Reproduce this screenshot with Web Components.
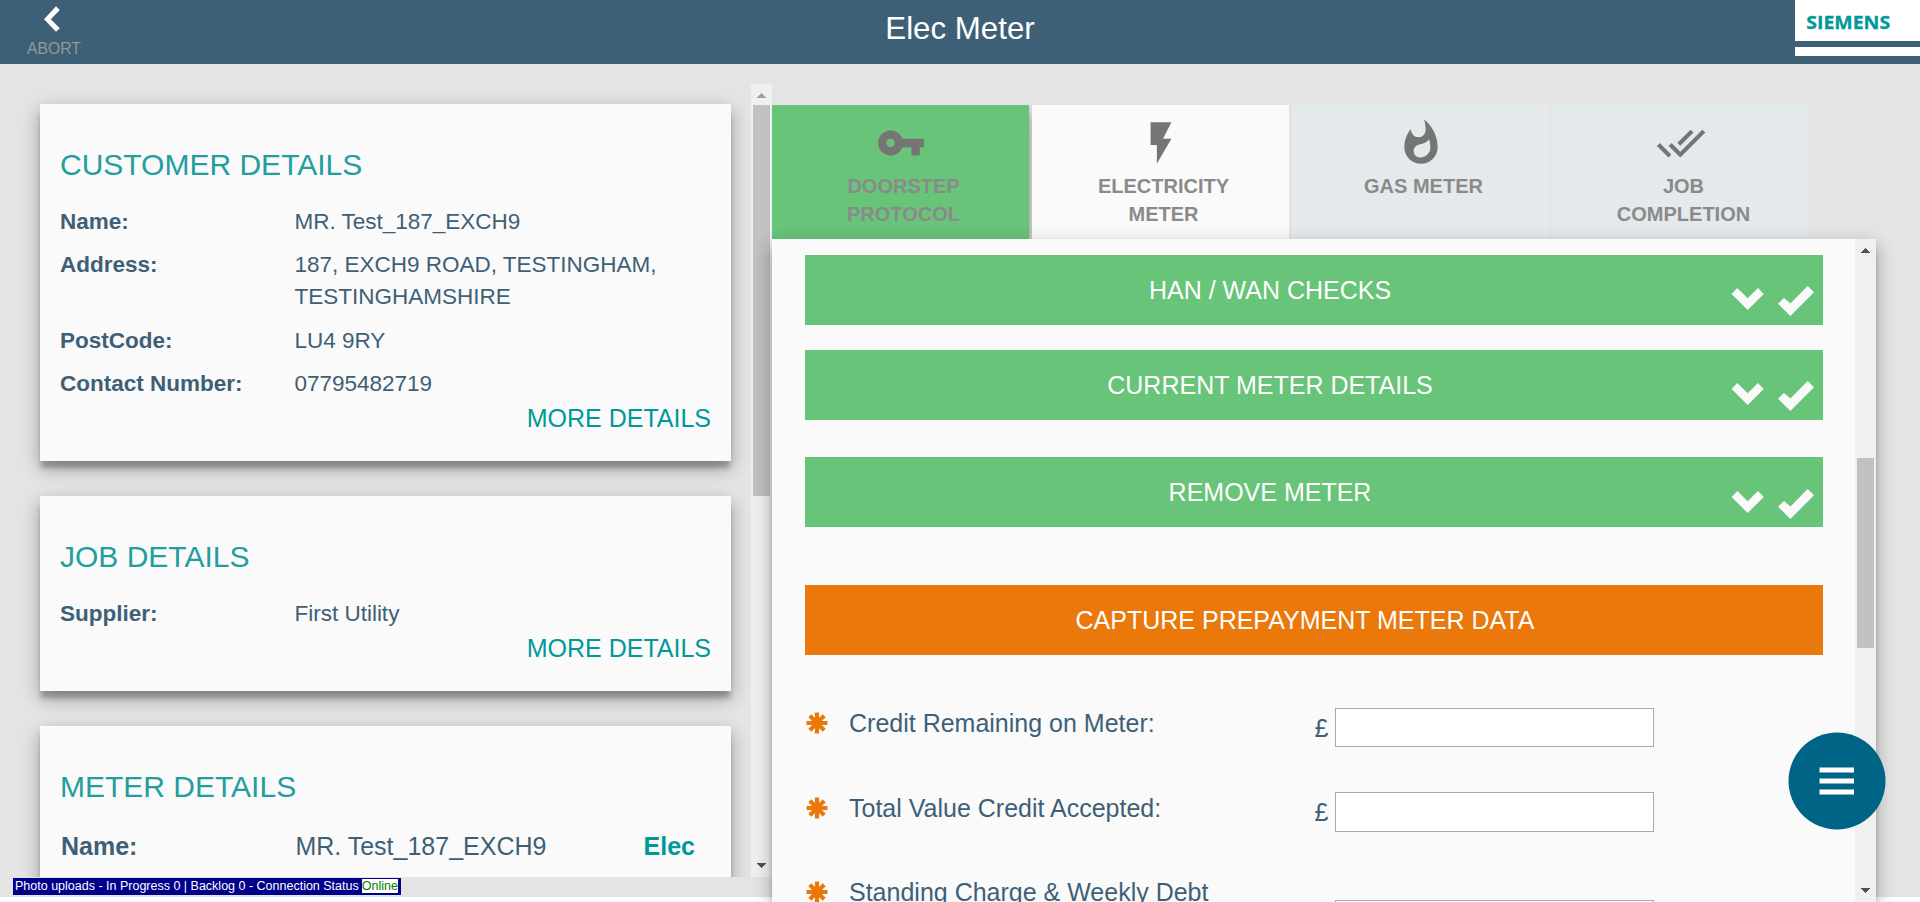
<!DOCTYPE html>
<html lang="en">
<head>
<meta charset="utf-8">
<title>Elec Meter</title>
<style>
html, body { margin: 0; height: 902px; overflow: hidden; background: #fff; }
body { font-family: "Liberation Sans", Arial, sans-serif; color: #3e6077; }
</style>
</head>
<body>
<meter-app></meter-app>
<script>
const define = (name, html) => {
  const template = document.createElement('template');
  template.innerHTML = html;
  customElements.define(name, class extends HTMLElement {
    constructor() {
      super();
      this.attachShadow({ mode: 'open' }).append(template.content.cloneNode(true));
    }
  });
};

define('app-header', `
<style>
:host { display: grid; grid-template-columns: 300px 1fr 300px; height: 64px; background: #3e6077; color: #fff; }
.abort { width: 108px; display: flex; flex-direction: column; align-items: center; font-size: 15.7px; line-height: 22px; color: #8f9a9d; }
.abort svg { display: block; width: 108px; height: 38px; }
h1 { margin: 0; font-size: 31.25px; font-weight: 400; text-align: center; line-height: 58px; height: 64px; }
.logo { justify-self: end; width: 125px; height: 56px; display: flex; flex-direction: column; justify-content: space-between; }
.logo svg { display: block; background: #fff; }
.logo i { display: block; height: 9.5px; background: #fff; }
</style>
<div class="abort"><svg viewBox="0 0 108 38"><path fill="#fff" d="M56 6.3 59.8 10 50.8 19.2 59.8 28.3 56 31.7 44 19.2Z"/></svg>ABORT</div>
<h1>Elec Meter</h1>
<div class="logo"><svg width="125" height="41" viewBox="0 0 125 41"><text x="11.2" y="28.7" textLength="84" lengthAdjust="spacingAndGlyphs" font-family="Open Sans, sans-serif" font-weight="700" font-size="18.2" fill="#099" stroke="#099" stroke-width=".3">SIEMENS</text></svg><i></i></div>`);

define('scroll-rail', `
<style>
:host { display: flex; flex-direction: column; width: 21px; flex: none; background: #f0f0f0; --up: #505050; }
svg { display: block; width: 21px; height: 21px; flex: none; }
.track { flex: 1; padding: var(--start, 0) 2px 0; }
.thumb { height: var(--size); background: #c1c1c1; }
</style>
<svg viewBox="0 0 21 21" shape-rendering="crispEdges"><path fill="var(--up)" d="M10 9h1v1h1v1h1v1h1v1h1v1H6v-1h1v-1h1v-1h1v-1h1z"/></svg>
<div class="track"><div class="thumb"></div></div>
<svg viewBox="0 0 21 21" shape-rendering="crispEdges"><path fill="#505050" d="M6 7h9v1h-1v1h-1v1h-1v1h-1v1h-1v-1H9v-1H8V9H7V8H6z"/></svg>`);

define('info-card', `
<style>
:host { display: block; box-sizing: border-box; width: 691px; flex: none; padding: 40px 20px 0; background: #fafafa; box-shadow: var(--depth); }
.title { display: block; font-size: 30px; line-height: 42px; color: #229e9e; margin-bottom: 20px; }
.more { display: block; text-align: right; font-size: 25px; line-height: 36px; color: #099; }
</style>
<span class="title"><slot name="title"></slot></span>
<slot></slot>
<span class="more"><slot name="more"></slot></span>`);

define('info-row', `
<style>
:host { display: grid; grid-template-columns: 234.4px 1fr auto; font-size: var(--row-size, 22.5px); line-height: 32px; margin-bottom: 11.3px; }
.label { font-weight: 700; }
.tag { font-weight: 700; color: #099; padding-right: 16px; }
</style>
<span class="label"><slot name="label"></slot></span><span><slot></slot></span><span class="tag"><slot name="tag"></slot></span>`);

define('step-tab', `
<style>
:host { display: flex; flex-direction: column; align-items: center; box-sizing: border-box; width: 257px; height: 134px; padding-top: 12.5px; background: #e4eaec; color: #8a8a8a; }
::slotted(svg) { display: block; width: 50px; height: 50px; fill: #757575; margin-bottom: 4.9px; }
.text { width: 170px; padding-left: 6px; text-align: center; font-weight: 700; font-size: 20px; line-height: 28px; }
</style>
<slot name="icon"></slot><div class="text"><slot></slot></div>`);

define('section-bar', `
<style>
:host { display: flex; height: 70px; align-items: center; background: #68c479; color: #fff; font-size: 25px; }
.text { flex: 1; text-align: center; }
svg { display: block; width: 88px; height: 70px; overflow: visible; margin-top: var(--nudge, 0); }
:host([active]) { background: #eb780a; }
:host([active]) svg { visibility: hidden; width: 18px; }
</style>
<span class="text"><slot></slot></span>
<svg viewBox="0 0 88 70" fill="#fafafa"><path d="M2.3 33 12.7 43.2 23 33 28.8 39 12.7 55-3.4 39Z"/><path d="M72.7 31 79 37.2 55.4 61 43 48.7 49 43 55.4 48.4Z"/></svg>`);

define('money-field', `
<style>
:host { display: grid; grid-template-columns: 44px 465.5px 20.5px 319px; font-size: 25px; line-height: 36px; height: 84px; align-items: start; }
svg { width: 22px; height: 22px; margin: calc(5.5px + var(--drop, 0px)) 0 0 1px; }
.pound { padding-top: 4px; }
input { display: block; box-sizing: border-box; width: 319px; height: calc(39px + var(--drop, 0px)); margin: 2px 0 0; border: 1px solid #a9a9a9; background: #fff; padding: 0; }
.label { margin-top: calc(-1px + var(--drop, 0px)); white-space: nowrap; }
:host([stacked]) .pound { visibility: hidden; }
:host([stacked]) input { margin-top: 26px; }
</style>
<svg viewBox="-11 -11 22 22" stroke="#eb780a" stroke-width="4.2"><path d="M0-10.5v21M-10.5 0h21M-7.2-7.2 7.2 7.2M-7.2 7.2 7.2-7.2"/></svg>
<span class="label"><slot></slot></span><span class="pound"><slot name="unit"></slot></span><input aria-label="Amount">`);

define('menu-button', `
<style>
:host { display: block; width: 98px; height: 98px; }
svg { display: block; }
</style>
<svg width="98" height="98"><circle cx="49" cy="49" r="48.5" fill="#006487"/><path fill="#fff" d="M31.5 35.5h34.5v4.9H31.5zM31.5 46.5h34.5v4.9H31.5zM31.5 57.5h34.5v4.9H31.5z"/></svg>`);

define('upload-status', `
<style>
:host { display: block; box-sizing: border-box; width: 388px; height: 17px; padding: 1px 3px 2px 2px; background: #00008b; color: #fff; font-size: 12.5px; line-height: 14px; white-space: nowrap; }
div { display: flex; justify-content: space-between; }
b { font-weight: 400; background: #fff; color: #008000; }
</style>
<div><span>Photo uploads - In Progress 0 | Backlog 0 - Connection Status</span><b>Online</b></div>`);

define('meter-app', `
<style>
:host { display: block; position: relative; width: 1920px; height: 902px; overflow: hidden;
  --depth: 0 8px 5px -1px rgba(0,0,0,.24), 0 8px 17px rgba(0,0,0,.18), 0 6px 20px rgba(0,0,0,.14); }
main { display: flex; height: 833px; background: #e4e4e4; }
.left { display: flex; width: 772px; height: 793px; margin-top: 20px; overflow: hidden; }
.cards { flex: 1; display: flex; flex-direction: column; gap: 35px; padding: 20px 0 0 40px; overflow: hidden; }
.left scroll-rail { --size: 391px; --up: #a0a0a0; }
.right { width: 1104px; padding-top: 41px; }
.tabs { display: flex; gap: 3px; height: 134px; }
.done { background: #68c479; clip-path: inset(0 -3px 0 0); box-shadow: var(--depth); }
.now { background: #fafafa; z-index: 1; }
.future { z-index: 1; }
.panel { position: relative; z-index: 2; display: flex; height: 663px; background: #fafafa; box-shadow: var(--depth); }
.panel scroll-rail { --start: 198px; --size: 190px; }
.form { flex: 1; padding: 16px 32px 0 33px; overflow: hidden; }
.big { --row-size: 25px; padding: 2px 0 0 1px; }
menu-button { position: absolute; left: 1788px; top: 732px; z-index: 3; }
upload-status { position: absolute; left: 13px; top: 878px; z-index: 3; }
</style>
<app-header></app-header>
<main>
  <div class="left">
    <div class="cards">
      <info-card style="height:357px"><span slot="title">CUSTOMER DETAILS</span>
        <info-row><span slot="label">Name:</span>MR. Test_187_EXCH9</info-row>
        <info-row><span slot="label">Address:</span>187, EXCH9 ROAD, TESTINGHAM,<br>TESTINGHAMSHIRE</info-row>
        <info-row><span slot="label">PostCode:</span>LU4 9RY</info-row>
        <info-row style="margin-bottom:0"><span slot="label">Contact Number:</span>07795482719</info-row>
        <span slot="more">MORE DETAILS</span></info-card>
      <info-card style="height:195px"><span slot="title">JOB DETAILS</span>
        <info-row style="margin-bottom:0"><span slot="label">Supplier:</span>First Utility</info-row>
        <span slot="more">MORE DETAILS</span></info-card>
      <info-card style="height:300px"><span slot="title">METER DETAILS</span>
        <info-row class="big"><span slot="label">Name:</span>MR. Test_187_EXCH9<span slot="tag">Elec</span></info-row></info-card>
    </div>
    <scroll-rail></scroll-rail>
  </div>
  <div class="right">
    <div class="tabs">
      <step-tab class="done"><svg slot="icon" viewBox="0 0 24 24"><path d="M12.65 10C11.83 7.67 9.61 6 7 6c-3.31 0-6 2.69-6 6s2.69 6 6 6c2.61 0 4.83-1.67 5.65-4H17v4h4v-4h2v-4H12.65zM7 14c-1.1 0-2-.9-2-2s.9-2 2-2 2 .9 2 2-.9 2-2 2z"/></svg>DOORSTEP<br>PROTOCOL</step-tab>
      <step-tab class="now"><svg slot="icon" viewBox="0 0 24 24"><path d="M7 2v11h3v9l7-12h-4l4-8z"/></svg>ELECTRICITY<br>METER</step-tab>
      <step-tab class="future"><svg slot="icon" viewBox="0 0 24 24"><path d="M13.5.67s.74 2.65.74 4.8c0 2.06-1.35 3.73-3.41 3.73-2.07 0-3.63-1.67-3.63-3.73l.03-.36C5.21 7.51 4 10.62 4 14c0 4.42 3.58 8 8 8s8-3.58 8-8C20 8.61 17.41 3.8 13.5.67zM11.71 19c-1.78 0-3.22-1.4-3.22-3.14 0-1.62 1.05-2.76 2.81-3.12 1.77-.36 3.6-1.21 4.62-2.58.39 1.29.59 2.65.59 4.04 0 2.65-2.15 4.8-4.8 4.8z"/></svg>GAS METER</step-tab>
      <step-tab class="future"><svg slot="icon" viewBox="0 0 24 24"><path d="M18 7l-1.41-1.41-6.34 6.34 1.41 1.41L18 7zm4.24-1.41L11.66 16.17 7.48 12l-1.41 1.41L11.66 19l12-12-1.42-1.41zM.41 13.41L6 19l1.41-1.41L1.83 12 .41 13.41z"/></svg>JOB<br>COMPLETION</step-tab>
    </div>
    <div class="panel">
      <div class="form">
        <section-bar>HAN / WAN CHECKS</section-bar>
        <section-bar style="margin-top:25px">CURRENT METER DETAILS</section-bar>
        <section-bar style="margin-top:37px;--nudge:2px">REMOVE METER</section-bar>
        <section-bar active style="margin-top:58px">CAPTURE PREPAYMENT METER DATA</section-bar>
        <money-field style="margin-top:51px">Credit Remaining on Meter:<span slot="unit">£</span></money-field>
        <money-field style="--drop:1px">Total Value Credit Accepted:<span slot="unit">£</span></money-field>
        <money-field stacked style="--drop:1px">Standing Charge &amp; Weekly Debt</money-field>
      </div>
      <scroll-rail></scroll-rail>
    </div>
  </div>
</main>
<menu-button></menu-button>
<upload-status></upload-status>`);
</script>
</body>
</html>
